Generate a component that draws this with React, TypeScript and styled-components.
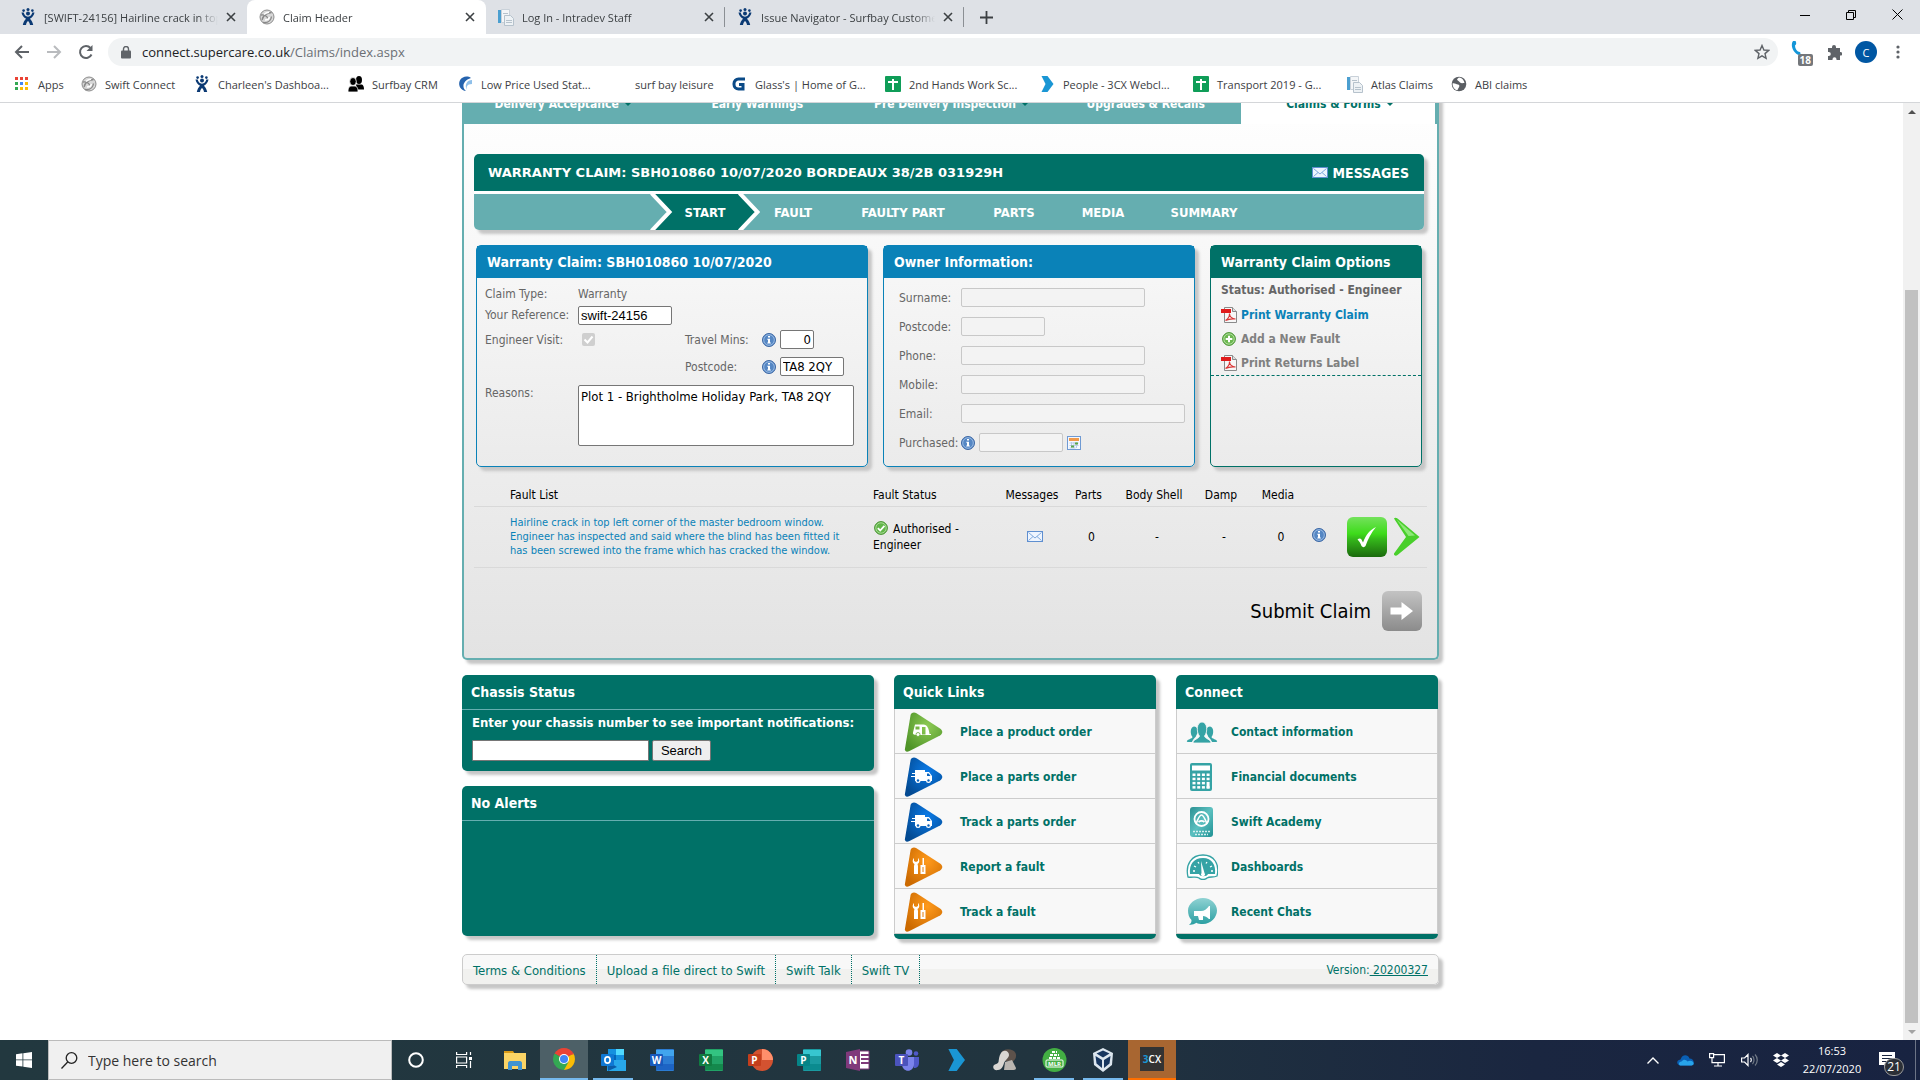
import React from "react";
import styled, { createGlobalStyle, css } from "styled-components";

const ui = `"Open Sans", "Noto Sans", sans-serif`;
const body = `"DejaVu Sans Condensed", "DejaVu Sans", sans-serif`;
const green = "#007167";
const teal = "#65aeb0";
const blue = "#0a82b8";
const shadow = "4px 4px 3px #c6c6c6";

const GlobalStyle = createGlobalStyle`
  *, *::before, *::after { box-sizing: border-box; }
  html, body { margin: 0; background: #fff; }
  button, input, textarea { font: inherit; margin: 0; }
  a { color: inherit; text-decoration: none; }
  svg { display: block; flex: none; }
`;

const Desktop = styled.div`
  display: flex;
  flex-direction: column;
  height: 100vh;
  overflow: hidden;
  font-family: ${body};
  font-size: 12px;
`;

/* ---------- browser chrome ---------- */

const Browser = styled.header`
  flex: none;
  background: #fff;
  border-bottom: 1px solid #d4d6d9;
  font-family: ${ui};
  color: #3c4043;
`;

const TabStrip = styled.div`
  display: flex;
  height: 34px;
  padding-left: 8px;
  background: #dee1e6;
`;

const Tab = styled.div<{ $active?: boolean; $rule?: boolean }>`
  display: flex;
  align-items: center;
  gap: 8px;
  width: 239px;
  padding: 0 11px 0 12px;
  font-size: 11px;
  border-radius: 8px 8px 0 0;
  ${(p) => p.$active && css`background: #fff;`}
  ${(p) =>
    p.$rule &&
    css`
      background: linear-gradient(#8b8f94, #8b8f94) right center / 1px 20px no-repeat;
    `}
`;

const TabTitle = styled.span`
  flex: 1;
  overflow: hidden;
  white-space: nowrap;
  mask-image: linear-gradient(90deg, #000 88%, transparent);
`;

const PlainButton = styled.button`
  display: flex;
  align-items: center;
  justify-content: center;
  padding: 0;
  border: 0;
  background: none;
  color: inherit;
`;

const NewTab = styled(PlainButton)`
  width: 44px;
`;

const WindowButtons = styled.div`
  display: flex;
  margin-left: auto;
  height: 29px;
`;

const WindowButton = styled(PlainButton)`
  width: 46px;
  color: #000;
`;

const Toolbar = styled.div`
  display: flex;
  align-items: center;
  height: 36px;
  padding: 0 6px;
`;

const ToolButton = styled(PlainButton)<{ $dim?: boolean }>`
  width: 32px;
  height: 32px;
  color: ${(p) => (p.$dim ? "#b9bbbe" : "#5f6368")};
`;

const AddressBar = styled.form`
  display: flex;
  flex: 1;
  align-items: center;
  height: 28px;
  margin: 0 8px 0 6px;
  padding: 0 8px 0 13px;
  border-radius: 14px;
  background: #f1f3f4;
  color: #5f6368;
`;

const AddressText = styled.a`
  flex: 1;
  margin-left: 11px;
  font-size: 13px;
  color: #6b6f74;
  strong {
    font-weight: 400;
    color: #202124;
  }
`;

const Avatar = styled.span`
  display: flex;
  align-items: center;
  justify-content: center;
  width: 22px;
  height: 22px;
  border-radius: 50%;
  background: #0057a3;
  color: #fff;
  font-size: 11px;
`;

const ExtensionIcon = styled.span`
  position: relative;
  width: 22px;
  height: 22px;
`;

const ExtensionBadge = styled.span`
  position: absolute;
  right: 0;
  bottom: -3px;
  padding: 0 2px;
  border-radius: 2px;
  background: #74777b;
  color: #fff;
  font-size: 10px;
  font-weight: 700;
  line-height: 12px;
`;

const Bookmarks = styled.nav`
  display: flex;
  align-items: center;
  height: 32px;
  padding: 0 14px 4px;
  font-size: 11px;
`;

const Bookmark = styled.a<{ $width: number }>`
  display: flex;
  align-items: center;
  gap: 8px;
  width: ${(p) => p.$width}px;
  white-space: nowrap;
`;

const BlankIcon = styled.span`
  width: 16px;
  height: 16px;
`;

/* ---------- page frame ---------- */

const Viewport = styled.main`
  display: flex;
  flex: 1;
  min-height: 0;
  overflow: hidden;
`;

const Scroller = styled.div`
  flex: 1;
  overflow: hidden;
`;

const Page = styled.div`
  max-width: 979px;
  margin: 0 auto;
  padding-right: 2px;
`;

const ScrollTrack = styled.div`
  display: flex;
  flex-direction: column;
  align-items: center;
  width: 17px;
  background: #f1f1f1;
`;

const ScrollArrow = styled.span<{ $down?: boolean }>`
  display: flex;
  align-items: center;
  justify-content: center;
  width: 17px;
  height: 17px;
  &::before {
    content: "";
    border: 4px solid transparent;
    ${(p) =>
      p.$down
        ? "border-top-color: #a3a3a3; border-bottom: 0;"
        : "border-bottom-color: #505050; border-top: 0;"}
  }
`;

const ScrollGap = styled.span`
  flex: 170;
`;

const ScrollThumb = styled.span`
  flex: 733;
  width: 13px;
  background: #c1c1c1;
`;

const Panel = styled.section`
  border: solid ${teal};
  border-width: 0 2px 2px;
  border-radius: 0 0 5px 5px;
  box-shadow: ${shadow};
  background: linear-gradient(#fff 20px, #e3e3e3);
`;

const SiteNav = styled.nav`
  display: flex;
  height: 42px;
  margin-top: -21px;
  padding-right: 2px;
  background: ${teal};
`;

const SiteLink = styled.a<{ $active?: boolean }>`
  display: flex;
  flex: 1;
  align-items: center;
  justify-content: center;
  gap: 5px;
  padding: 2px 0 0 4px;
  font-size: 12px;
  font-weight: 700;
  color: ${(p) => (p.$active ? green : "#fff")};
  background: ${(p) => (p.$active ? "#fff" : "none")};
`;

const Caret = styled.span`
  border: 4px solid transparent;
  border-top-color: ${green};
  border-bottom: 0;
`;

const PanelBody = styled.div`
  padding: 30px 10px 27px;
`;

const ClaimBanner = styled.div`
  margin: 0 3px 15px 0;
  border-radius: 5px;
  box-shadow: ${shadow};
  background: #fff;
`;

const ClaimTitle = styled.div`
  display: flex;
  align-items: center;
  justify-content: space-between;
  height: 37px;
  padding: 0 15px 0 14px;
  border-radius: 5px 5px 0 0;
  background: ${green};
  color: #fff;
`;

const ClaimHeading = styled.h1`
  margin: 0;
  font-family: "DejaVu Sans", sans-serif;
  font-size: 13px;
  font-weight: 700;
`;

const MessagesLink = styled.a`
  display: flex;
  align-items: center;
  gap: 5px;
  font-size: 14px;
  font-weight: 700;
`;

const Steps = styled.ol`
  display: flex;
  align-items: center;
  height: 36px;
  margin: 3px 0 0;
  padding: 0 0 0 176px;
  list-style: none;
  border-radius: 0 0 5px 5px;
  background: ${teal};
  color: #fff;
  font-size: 13px;
  font-weight: 700;
`;

const Step = styled.li<{ $width: number }>`
  width: ${(p) => p.$width}px;
  text-align: center;
`;

const CurrentStep = styled.li`
  display: grid;
  width: 110px;
  > * {
    grid-area: 1 / 1;
  }
  > a {
    align-self: center;
    justify-self: center;
  }
`;

/* ---------- cards ---------- */

const CardRow = styled.div`
  display: grid;
  grid-template-columns: 392fr 312fr 212fr;
  gap: 15px;
  margin: 0 5px 0 2px;
`;

const Card = styled.section<{ $tone: string }>`
  min-height: 222px;
  border: 1px solid ${(p) => p.$tone};
  border-radius: 5px;
  box-shadow: ${shadow};
  background: linear-gradient(#f8f8f8, #ebebeb);
  color: #666;
`;

const CardTitle = styled.h2<{ $tone: string }>`
  height: 32px;
  margin: 0;
  padding: 0 10px;
  background: ${(p) => p.$tone};
  color: #fff;
  font-size: 14px;
  line-height: 33px;
`;

const ClaimForm = styled.form`
  display: grid;
  grid-template-columns: 93px 107px 77px auto;
  grid-template-rows: 20px 22px 27px 27px auto;
  align-items: center;
  padding: 6px 8px;
`;

const FieldLabel = styled.label<{ $column?: number }>`
  grid-column: ${(p) => p.$column ?? 1};
  white-space: nowrap;
`;

const ReasonsLabel = styled(FieldLabel)`
  align-self: start;
  padding-top: 6px;
`;

const FieldText = styled.output`
  grid-column: 2 / -1;
`;

const WithIcon = styled.span`
  display: flex;
  align-items: center;
  gap: 4px;
`;

const TextBox = styled.input<{ $width: number }>`
  width: ${(p) => p.$width}px;
  height: 19px;
  padding: 0 2px;
  border: 1px solid #767676;
  border-radius: 2px;
  background: #fff;
  color: #000;
  font-family: "Liberation Sans", Arial, sans-serif;
  font-size: 13px;
  &:disabled {
    border-color: #c8c8c8;
    background: #f3f3f3;
  }
`;

const MinutesBox = styled(TextBox)`
  text-align: right;
  font-family: ${body};
`;

const PostcodeBox = styled(TextBox)`
  font-family: ${body};
`;

const VisitTick = styled.input`
  width: 13px;
  height: 13px;
  margin-left: 4px;
  appearance: none;
  border-radius: 2px;
  background: #cfcfcf;
`;

const TickWrap = styled.span`
  display: grid;
  grid-column: 2;
  justify-content: start;
  align-items: center;
  > * {
    grid-area: 1 / 1;
  }
  > svg {
    margin-left: 4px;
    pointer-events: none;
  }
`;

const ReasonsBox = styled.textarea`
  grid-column: 2 / -1;
  width: 276px;
  height: 61px;
  margin-top: 5px;
  padding: 2px;
  border: 1px solid #767676;
  border-radius: 2px;
  color: #000;
  font-family: ${body};
  font-size: 13px;
  line-height: 18px;
  resize: none;
`;

const OwnerForm = styled.form`
  display: grid;
  grid-template-columns: 62px auto;
  grid-auto-rows: 29px;
  align-items: center;
  padding: 5px 8px 5px 15px;
`;

const OptionStatus = styled.p`
  margin: 0;
  padding: 0 10px;
  font-weight: 700;
  line-height: 25px;
`;

const OptionList = styled.ul`
  margin: 0;
  padding: 0 10px;
  list-style: none;
  border-bottom: 1px dashed ${green};
`;

const OptionLink = styled.a<{ $live?: boolean }>`
  display: flex;
  align-items: center;
  gap: 4px;
  height: 24px;
  font-weight: 700;
  color: ${(p) => (p.$live ? blue : "#808080")};
`;

/* ---------- fault table ---------- */

const FaultTable = styled.table`
  width: 100%;
  margin-top: 15px;
  border-collapse: collapse;
  table-layout: fixed;
  color: #000;
`;

const HeadCell = styled.th<{ $left?: boolean }>`
  height: 24px;
  padding: 2px 6px 0 0;
  border-bottom: 1px solid #d9d9d9;
  font-weight: 400;
  text-align: ${(p) => (p.$left ? "left" : "center")};
  &:first-child {
    padding-left: 36px;
  }
`;

const Cell = styled.td<{ $left?: boolean }>`
  height: 61px;
  padding: 0;
  border-bottom: 1px solid #d9d9d9;
  text-align: ${(p) => (p.$left ? "left" : "center")};
  line-height: 16px;
  &:first-child {
    padding-left: 36px;
  }
  > svg {
    margin: 0 auto;
  }
`;

const FaultLink = styled.a`
  display: block;
  width: 344px;
  color: ${blue};
  font-size: 11px;
  line-height: 14px;
`;

const StatusText = styled.span`
  display: block;
  width: 100px;
  svg {
    display: inline-block;
    margin: 0 5px 0 1px;
    vertical-align: -2px;
  }
`;

const RowActions = styled.div`
  display: flex;
  align-items: center;
  gap: 6px;
  padding-left: 10px;
`;

const InfoCell = styled(Cell)`
  padding-bottom: 4px;
  > svg {
    margin: 0;
  }
`;

const SubmitRow = styled.div`
  display: flex;
  align-items: center;
  justify-content: flex-end;
  margin: 23px 5px 0 0;
`;

const SubmitButton = styled(PlainButton)`
  gap: 11px;
  color: #000;
  font-size: 20px;
`;

/* ---------- lower boxes ---------- */

const LowerRow = styled.div`
  display: grid;
  grid-template-columns: 412fr 262fr 262fr;
  column-gap: 20px;
  align-items: start;
  margin-top: 15px;
  padding-right: 1px;
`;

const Stack = styled.div`
  display: grid;
  gap: 15px;
`;

const Box = styled.section<{ $tall?: boolean }>`
  min-height: ${(p) => (p.$tall ? 150 : 96)}px;
  border-radius: 5px;
  box-shadow: ${shadow};
  background: ${green};
  color: #fff;
`;

const BoxTitle = styled.h2<{ $rule?: boolean }>`
  height: ${(p) => (p.$rule ? 35 : 34)}px;
  margin: 0;
  padding: 0 9px;
  border-bottom: ${(p) => (p.$rule ? `1px solid ${teal}` : "0")};
  font-size: 14px;
  line-height: 34px;
`;

const ChassisForm = styled.form`
  padding: 3px 10px 10px;
  font-size: 13px;
  font-weight: 700;
  line-height: 20px;
`;

const SearchLine = styled.div`
  display: flex;
  gap: 3px;
  margin-top: 7px;
`;

const ChassisInput = styled.input`
  width: 177px;
  height: 21px;
  border: 1px solid #767676;
  border-radius: 1px;
  background: #fff;
`;

const SearchButton = styled.button`
  width: 59px;
  height: 21px;
  padding: 0;
  border: 1px solid #767676;
  border-radius: 2px;
  background: #efefef;
  font-family: "Liberation Sans", Arial, sans-serif;
  font-size: 13px;
  font-weight: 400;
  color: #000;
`;

const LinkBox = styled.section`
  padding-bottom: 5px;
  border-radius: 5px;
  box-shadow: ${shadow};
  background: ${green};
  color: #fff;
`;

const LinkList = styled.ul`
  margin: 0;
  padding: 0;
  list-style: none;
  border: solid #ccc;
  border-width: 0 1px;
  background: #f8f8f8;
`;

const LinkRow = styled.a`
  display: flex;
  align-items: center;
  height: 45px;
  padding: 2px 0 0 9px;
  border-bottom: 1px solid #ccc;
  color: ${green};
  font-weight: 700;
`;

const IconSlot = styled.span<{ $width: number }>`
  width: ${(p) => p.$width}px;
`;

const Footer = styled.footer`
  display: flex;
  height: 31px;
  margin-top: 15px;
  border: 1px solid #ccc;
  border-radius: 5px;
  box-shadow: ${shadow};
  background: linear-gradient(#f8f8f8 50%, #f1f1ef 50%);
  color: ${green};
`;

const FooterLink = styled.a`
  display: flex;
  align-items: center;
  padding: 2px 10px 0;
  border-right: 1px dotted ${green};
  font-size: 13px;
`;

const Version = styled.span`
  align-self: center;
  margin-left: auto;
  padding: 2px 10px 0 0;
  a {
    text-decoration: underline;
    white-space: pre;
  }
`;

/* ---------- taskbar ---------- */

const Taskbar = styled.footer`
  display: flex;
  flex: none;
  height: 40px;
  background: linear-gradient(90deg, #22383f, #21343f 55%, #1a2640 80%, #182341);
  color: #fff;
  font-family: ${ui};
`;

const StartButton = styled(PlainButton)`
  width: 48px;
`;

const SearchBox = styled.label`
  display: flex;
  align-items: center;
  gap: 10px;
  width: 344px;
  padding-left: 12px;
  border: 1px solid #bbb;
  background: #f0f0f0;
  color: #222;
  input {
    width: 260px;
    padding: 0;
    border: 0;
    outline: 0;
    background: none;
    font-size: 14px;
  }
  input::placeholder {
    color: #333;
    opacity: 1;
  }
`;

const SystemButton = styled(PlainButton)`
  width: 48px;
`;

const Apps = styled.div`
  display: flex;
  gap: 1px;
  margin-left: 3px;
`;

const AppButton = styled(PlainButton)<{ $state?: "open" | "front" | "alert" }>`
  width: 48px;
  ${(p) =>
    p.$state === "open" &&
    css`
      background: linear-gradient(#76b9ed, #76b9ed) center bottom / 40px 2px no-repeat;
    `}
  ${(p) => p.$state === "front" && css`background: #4d6067; border-bottom: 2px solid #76b9ed;`}
  ${(p) => p.$state === "alert" && css`background: #a86631; border-bottom: 2px solid #ff6f00;`}
`;

const Tray = styled.div`
  display: flex;
  align-items: center;
  margin-left: auto;
`;

const TrayIcon = styled(PlainButton)`
  width: 32px;
  height: 40px;
`;

const Clock = styled.time`
  width: 70px;
  text-align: center;
  font-size: 11px;
  line-height: 18px;
`;

const Notifications = styled(PlainButton)`
  position: relative;
  width: 40px;
  height: 40px;
`;

const Count = styled.span`
  position: absolute;
  left: 17px;
  top: 18px;
  width: 20px;
  height: 18px;
  border: 1px solid #9a9a9a;
  border-radius: 9px;
  background: #2b2f36;
  font-size: 12px;
  line-height: 15px;
`;

const PeekStrip = styled.span`
  width: 5px;
  height: 40px;
  margin-left: 8px;
  border-left: 1px solid #6c7486;
`;

/* ---------- icons ---------- */

const Jira = () => (
  <svg width="16" height="18" viewBox="0 0 16 18" fill="#0b3a74">
    <circle cx="8" cy="1.6" r="1.5" /><circle cx="3.6" cy="2.6" r="1.3" /><circle cx="12.4" cy="2.6" r="1.3" />
    <circle cx="8" cy="5.6" r="2" />
    <path d="M1.5 4.5c.4 3 2.400 5.200 4.600 6.300C4.500 12.500 3.200 14.500 2.800 17H6c.2-1.700.9-3 2-4 1.100 1 1.800 2.300 2 4h3.200c-.4-2.500-1.700-4.500-3.300-6.200 2.200-1.100 4.200-3.300 4.600-6.300h-2.200C11.900 6.800 10.300 8.600 8 8.800 5.700 8.600 4.100 6.800 3.700 4.500z" />
  </svg>
);

const SwiftBall = () => (
  <svg width="16" height="16" viewBox="0 0 16 16" fill="none">
    <circle cx="8" cy="8" r="7" fill="#d7d7d7" stroke="#8d8d8d" />
    <path d="M3 11c1-4 4-7 9.500-7.500M4 13.500c5 .500 8-2 8.500-6M2 6c3-.5 6 1 7 4" stroke="#888" strokeWidth="1.300" />
    <path d="M5 5.500c1.500-1.500 3-2 5-2.200M6 11c2 0 4-1 4.500-3" stroke="#fff" strokeWidth="1.400" />
  </svg>
);

const Papers = () => (
  <svg width="16" height="17" viewBox="0 0 16 17">
    <path d="M3.500.5h8v13h-8z" fill="#f4f6f8" stroke="#c9d1d9" />
    <path d="M0 1h3v13H0z" fill="#4b9fd0" />
    <path d="M6.500 6.500h6l3 3v7h-9z" fill="#eef2f5" stroke="#b6c2cc" />
    <path d="M8 11.500h6M8 13.500h6M5 4.500h5" stroke="#b6c2cc" />
  </svg>
);

const Cross = () => (
  <svg width="10" height="10" viewBox="0 0 10 10" stroke="#3c4043" strokeWidth="1.600">
    <path d="M1 1l8 8M9 1L1 9" />
  </svg>
);

const Sheet = () => (
  <svg width="16" height="16" viewBox="0 0 16 16">
    <rect width="16" height="16" rx="1" fill="#0f9d58" />
    <path d="M3 6h10M8 3v11" stroke="#fff" strokeWidth="2" />
  </svg>
);

const Chevron3cx = ({ w = 13, h = 16 }: { w?: number; h?: number }) => (
  <svg width={w} height={h} viewBox="0 0 13 16">
    <path d="M1 0h6l6 8-6 8H1l4-8z" fill="#1a96d4" />
  </svg>
);

const AppsGrid = () => (
  <svg width="16" height="14" viewBox="0 0 16 14">
    {["#ea4335", "#ea4335", "#ea4335", "#34a853", "#4285f4", "#fbbc05", "#34a853", "#fbbc05", "#fbbc05"].map((c, i) => (
      <rect key={i} x={1 + (i % 3) * 5} y={Math.floor(i / 3) * 5} width="3" height="3" fill={c} />
    ))}
  </svg>
);

const People = () => (
  <svg width="16" height="16" viewBox="0 0 16 16" fill="#000">
    <ellipse cx="11" cy="4" rx="3" ry="4" /><path d="M8 8.500h6c1.500 1 2 2.500 2 5H9z" />
    <g stroke="#fff" strokeWidth=".8"><ellipse cx="5" cy="5.500" rx="3.300" ry="4" /><path d="M0 16c0-4 1-5.500 3-6h4c2 .5 3 2 3 6z" /></g>
  </svg>
);

const Wave = () => (
  <svg width="16" height="16" viewBox="0 0 16 16" fill="none">
    <path d="M14 2A7.300 7.300 0 1 0 9 15C5 12 5 5 14 2z" fill="#2563ae" />
    <path d="M15 4c-5 0-8 5-5 10-1-3 0-6 5-6" fill="#8fc0ea" />
  </svg>
);

const Glass = () => (
  <svg width="16" height="16" viewBox="0 0 16 16" fill="none">
    <path d="M14 3H7.500A4.500 4.500 0 0 0 3 7.500v1A4.500 4.500 0 0 0 7.500 13H12V8.500H8" stroke="#0a4a87" strokeWidth="3" />
  </svg>
);

const Globe = () => (
  <svg width="16" height="16" viewBox="0 0 16 16">
    <circle cx="8" cy="8" r="7.300" fill="#5a5e63" />
    <path d="M1.500 7.500C3 6.500 5 8 7 8.500c2 .5 1.500 2.500.5 3.500-.7.800-.5 2-1.500 2.300C3.500 13.500 1.500 11 1.500 7.500zM8 1.500c-1.500 1-2.500 2-1.500 2.800S8 5.500 9 6.500c1.200 1 3 .5 4.500.5-.5-3-2.500-5.200-5.500-5.500z" fill="#fff" />
  </svg>
);

const Envelope = () => (
  <svg width="16" height="11" viewBox="0 0 16 11">
    <rect x=".5" y=".5" width="15" height="10" fill="#eef5ff" stroke="#5f8fd0" />
    <path d="M1.500 1.500L8 7l6.500-5.500M1.500 9.500L6 5.500M14.500 9.500L10 5.500" fill="none" stroke="#7fa9dd" />
  </svg>
);

const Info = () => (
  <svg width="14" height="14" viewBox="0 0 14 14">
    <circle cx="7" cy="7" r="6.500" fill="#5587c4" stroke="#3c67a4" />
    <circle cx="7" cy="7" r="5.300" fill="none" stroke="#a9c6ea" strokeWidth=".8" />
    <path d="M6 3h2v1.600H6zM5.300 5.800H8v3.700h.8v1H5.300v-1H6V6.700h-.7z" fill="#fff" />
  </svg>
);

const Pdf = () => (
  <svg width="16" height="16" viewBox="0 0 16 16">
    <path d="M3.500.5h8l4 4v11h-12z" fill="#f7f7f7" stroke="#8a8a8a" />
    <path d="M11.500.5v4h4" fill="#ddd" stroke="#8a8a8a" />
    <path d="M0 2h10v4H0z" fill="#e01b1b" />
    <path d="M4.500 13.500C7 12 8.500 9 8.500 6.500c0 3 2.500 5.500 6 5.500-4-.5-7 0-10 1.500z" fill="none" stroke="#d93636" strokeWidth="1.100" />
  </svg>
);

const Add = () => (
  <svg width="16" height="14" viewBox="0 0 16 14">
    <circle cx="8" cy="7" r="6.400" fill="#6cb850" stroke="#4b9434" />
    <circle cx="8" cy="7" r="5.200" fill="none" stroke="#c2e6b4" strokeWidth=".8" />
    <path d="M8 3.700v6.600M4.700 7h6.600" stroke="#fff" strokeWidth="2" />
  </svg>
);

const Accepted = () => (
  <svg width="14" height="14" viewBox="0 0 14 14">
    <circle cx="7" cy="7" r="6.400" fill="#62b64a" stroke="#4b9434" />
    <circle cx="7" cy="7" r="5.200" fill="none" stroke="#b7e2a8" strokeWidth=".8" />
    <path d="M3.800 7.200L6.200 9.500l4.200-4.700" stroke="#fff" strokeWidth="1.800" fill="none" />
  </svg>
);

const Calendar = () => (
  <svg width="14" height="14" viewBox="0 0 14 14">
    <rect x=".5" y=".5" width="13" height="13" fill="#f4f8ff" stroke="#6f9ad3" />
    <path d="M2 2h10v3H2z" fill="#f09a4c" />
    <path d="M2.500 7h9M2.500 9.500h9M2.500 12h6M4.500 6v6M7 6v6M9.500 6v6" stroke="#b9cde8" />
    <path d="M8 6.500h3v2H8zM4 9.500h3v2H4z" fill="#5ba64a" />
  </svg>
);

const GreenTick = () => (
  <svg width="40" height="40" viewBox="0 0 40 40">
    <defs>
      <linearGradient id="tick" x2="0" y2="1">
        <stop stopColor="#74e25c" /><stop offset=".42" stopColor="#3ddb1a" /><stop offset=".55" stopColor="#35b81b" /><stop offset="1" stopColor="#1b6a0d" />
      </linearGradient>
    </defs>
    <rect width="40" height="40" rx="6" fill="url(#tick)" />
    <path d="M10.500 22.500c1.500-1.500 3-1.500 4 0l1.500 3C19 18 22.500 13 29 10c-5 6-8 12-10.500 19-1 1.500-3 1.500-4 0-.8-2.500-2-4.500-4-6.500z" fill="#fff" />
  </svg>
);

const GreenChevron = () => (
  <svg width="27" height="40" viewBox="0 0 27 40">
    <path d="M1 1.500C1.500.3 3.500.5 4.500 1.500L26.500 20 4.500 38c-1.500 1.500-4 .5-3.500-1.500L13 20z" fill="#49cf2b" />
    <path d="M3.500 2.500L22 18.500 15.500 19z" fill="#8ee878" />
  </svg>
);

const GreyArrow = () => (
  <svg width="40" height="40" viewBox="0 0 40 40">
    <defs>
      <linearGradient id="grey" x2="0" y2="1"><stop stopColor="#c3c3c3" /><stop offset="1" stopColor="#8b8b8b" /></linearGradient>
    </defs>
    <rect width="40" height="40" rx="6" fill="url(#grey)" />
    <path d="M8.500 16.500h11V11L31 20l-11.500 9v-5.500h-11z" fill="#fff" />
  </svg>
);

const StepShape = () => (
  <svg width="110" height="36" viewBox="0 0 110 36">
    <path d="M0 0h91l17 18-17 18H0l18-18z" fill={green} />
    <path d="M1.500 -1l18 19-18 19M89.500-1l18 19-18 19" fill="none" stroke="#fff" strokeWidth="4" />
  </svg>
);

const VisitMark = () => (
  <svg width="13" height="13" viewBox="0 0 13 13">
    <path d="M2.500 6.500l3 3 5-6" fill="none" stroke="#fff" strokeWidth="2" />
  </svg>
);

type Kind = "caravan" | "van" | "tools";
const tones: Record<Kind, string[]> = {
  caravan: ["#8ecb55", "#4f9428"],
  van: ["#0b7be8", "#034a92"],
  tools: ["#ff9a1c", "#cc6a00"],
};

const Play = ({ kind }: { kind: Kind }) => (
  <svg width="39" height="40" viewBox="0 0 39 40">
    <defs>
      <radialGradient id={`play-${kind}`} cx=".6" cy=".35" r=".7"><stop stopColor={tones[kind][0]} /><stop offset="1" stopColor={tones[kind][1]} /></radialGradient>
    </defs>
    <path d="M6.500 3.500C7 .5 10 0 12.500 1.200L36 16.500c3 2 3 5 0 7L5.500 39c-3 1.500-5 .5-4.500-2.500z" fill={`url(#play-${kind})`} />
    {kind === "caravan" && (
      <g fill="#fff">
        <path fillRule="evenodd" d="M11 12.500h8.500c3.500 0 5.500 4 6 9.500h1.500v1H14c-3.500 0-5.500-.5-5-2.500zM11.500 14.500v3h4v-3zM18 15v7.500h3.500V15z" /><circle cx="14" cy="22.500" r="2" stroke="#6aa83c" strokeWidth=".8" />
      </g>
    )}
    {kind === "van" && (
      <g fill="#fff">
        <path d="M11 13h10v2h4l3 4v5H11v-4H7v-1h4v-2H8v-1h3z" /><circle cx="14" cy="23.500" r="2.500" /><circle cx="24.500" cy="23.500" r="2.500" />
        <path d="M23 16.500h1.800l1.700 2.500H23z" fill="#0762bd" /><circle cx="14" cy="23.500" r="1.200" fill="#0762bd" /><circle cx="24.500" cy="23.500" r="1.200" fill="#0762bd" />
      </g>
    )}
    {kind === "tools" && (
      <g fill="#fff">
        <path d="M10 11v3l2 1 2-1v-3c2 2 1.500 5-.5 6l.5 2v8h-4v-8l.5-2c-2-1-2.500-4-.5-6zM18.500 11h1.500v7h1.500v9h-5v-9h2z" /><path d="M19 20v5" stroke="#e07c0a" />
      </g>
    )}
  </svg>
);

const mint = "#35a3a5";
const Contacts = () => (
  <svg width="32" height="22" viewBox="0 0 32 22" fill={mint}>
    <path d="M3 21c0 0-3 0-2-1 1-2 5-2 5.500-4C4 13 4 6 8 5.500c3 0 4 3 3.500 6.500L10 15c0 1-3 3-4 6z" />
    <path d="M29 21c0 0 3 0 2-1-1-2-5-2-5.500-4 2.500-3 2.500-10-1.500-10.500-3 0-4 3-3.500 6.500L22 15c0 1 3 3 4 6z" />
    <path d="M7 22c0-4 6-4 6.500-7C10 11 10.500 1 16 1s6 10 2.500 14c.5 3 6.500 3 6.500 7z" stroke="#f8f8f8" strokeWidth=".8" />
  </svg>
);

const Calculator = () => (
  <svg width="32" height="28" viewBox="0 0 32 28">
    <rect x="4" width="22" height="28" rx="2" fill={mint} /><path d="M6 2.500h18v5H6z" fill="#fff" />
    {[0, 1, 2, 3].map((r) => [0, 1, 2, 3].map((c) => <rect key={`${r}${c}`} x={6.500 + c * 4.700} y={10.500 + r * 4.200} width="3" height={r === 2 && c === 3 ? 6.500 : 2.500} fill="#fff" />))}
  </svg>
);

const Academy = () => (
  <svg width="32" height="30" viewBox="0 0 32 30">
    <defs><linearGradient id="academy" x2="1" y2="1"><stop stopColor="#2c9193" /><stop offset=".5" stopColor="#5cc0c0" /><stop offset="1" stopColor="#1f9194" /></linearGradient></defs>
    <rect x="4" width="23" height="30" rx="3" fill="url(#academy)" />
    <circle cx="15.500" cy="12" r="7" fill="none" stroke="#fff" strokeWidth="1.800" /><path d="M10 17c1.500-4 3.500-9 5.500-9s4 5 5.500 9M12.500 15c2-1.500 4-1.500 6 0" fill="none" stroke="#fff" strokeWidth="1.700" />
    <path d="M7 24.500h17M9 27.500h13" stroke="#d6f0f0" strokeWidth="1.600" strokeDasharray="2 1" />
  </svg>
);

const Gauge = () => (
  <svg width="32" height="26" viewBox="0 0 32 26">
    <path d="M2 23C-1 10 6 1 17 1s17 9 14 21c-4 2-7 0-10 2-2 2-6 2-8 0-3-2-7 0-11-1z" fill="#fff" stroke={mint} strokeWidth="1.300" />
    <path d="M4 20C3 10 8 4 17 4s13 7 12 16h-7c-1 3-8 3-9 0z" fill={mint} />
    <path d="M15 7l3.500 12a2 2 0 1 1-3 0z" fill="#fff" /><path d="M7 17h2M8 12l2 1M12 8l1 1.500M21 8l-1 1.500M26 12l-2 1M27 17h-2" stroke="#fff" strokeWidth="1.300" />
  </svg>
);

const Chats = () => (
  <svg width="32" height="27" viewBox="0 0 32 27">
    <defs><linearGradient id="chat" x2="0" y2="1"><stop stopColor="#8fd2d3" /><stop offset="1" stopColor="#2a9fa2" /></linearGradient></defs>
    <path d="M17 0c8 0 14 6 14 12.500S25 26 17 26c-3 0-5 0-6.500-1.200C8 26.500 5 27 3 26.500c2-1 2.500-2.500 2.500-4.500C3 19.500 2 16 2 12.500 2 6 9 0 17 0z" fill="url(#chat)" />
    <path d="M8 13h7c3 0 6-2 8-5h1v13h-1c-2-2-4-3-6-3v4h-4l-1-4H8z" fill="#fff" />
  </svg>
);

const Office = ({ letter, back, mid, front }: { letter: string; back: string; mid: string; front: string }) => (
  <svg width="24" height="22" viewBox="0 0 24 22">
    <rect x="6" width="18" height="22" rx="1" fill={mid} /><path d="M6 1h18v6H6z" fill={back} /><path d="M6 15h18v6H6z" fill={front} opacity=".7" />
    <rect y="5" width="13" height="12" rx="1" fill={front} />
    <text x="6.500" y="14.500" textAnchor="middle" fontFamily="Open Sans, sans-serif" fontSize="10" fontWeight="700" fill="#fff">{letter}</text>
  </svg>
);

const PowerPoint = () => (
  <svg width="25" height="22" viewBox="0 0 25 22">
    <circle cx="14" cy="11" r="11" fill="#d35230" /><path d="M14 0a11 11 0 0 1 11 11H14z" fill="#ff8f6b" />
    <rect y="5" width="13" height="12" rx="1" fill="#c43e1c" />
    <text x="6.500" y="14.500" textAnchor="middle" fontFamily="Open Sans, sans-serif" fontSize="10" fontWeight="700" fill="#fff">P</text>
  </svg>
);

const OneNote = () => (
  <svg width="24" height="22" viewBox="0 0 24 22">
    <path d="M12 2h11v18H12z" fill="#fff" stroke="#80397b" /><path d="M15 6h8M15 10h8M15 14h8" stroke="#80397b" strokeWidth="2" /><path d="M0 3l14-3v22L0 19z" fill="#80397b" />
    <text x="7" y="15" textAnchor="middle" fontFamily="Open Sans, sans-serif" fontSize="11" fontWeight="700" fill="#fff">N</text>
  </svg>
);

const Teams = () => (
  <svg width="24" height="22" viewBox="0 0 24 22">
    <circle cx="14" cy="3.500" r="3.300" fill="#7b83eb" /><circle cx="21" cy="4.500" r="2.300" fill="#5059c9" />
    <path d="M17 8h7v6c0 3-2 5-5 5z" fill="#5059c9" /><path d="M7 8h12v7c0 9-12 9-12 0z" fill="#7b83eb" />
    <rect y="5" width="13" height="12" rx="1" fill="#4b53bc" />
    <text x="6.500" y="14.500" textAnchor="middle" fontFamily="Open Sans, sans-serif" fontSize="10" fontWeight="700" fill="#fff">T</text>
  </svg>
);

const Outlook = () => (
  <svg width="25" height="22" viewBox="0 0 25 22">
    <path d="M7 0h16v12H7z" fill="#1490df" /><path d="M15 0h8v6h-8z" fill="#50d9ff" /><path d="M7 6h8v6H7z" fill="#0364b8" /><path d="M6 11h19v11H6z" fill="#28a8ea" /><path d="M6 12l10 6-9 4z" fill="#0a5ca8" />
    <rect y="5" width="13" height="12" rx="1" fill="#0f78d4" /><ellipse cx="6.500" cy="11" rx="2.600" ry="3.200" fill="none" stroke="#fff" strokeWidth="1.700" />
  </svg>
);

const Explorer = () => (
  <svg width="22" height="19" viewBox="0 0 22 19">
    <path d="M0 0h9l2 3H0z" fill="#d99a17" /><path d="M0 2h22v16H0z" fill="#fbd465" /><path d="M4 19v-7c0-1 1-2 2-2h10c1 0 2 1 2 2v7h-4v-4H8v4z" fill="#3f93d2" />
  </svg>
);

const Chrome = () => (
  <svg width="22" height="22" viewBox="0 0 22 22">
    <path d="M11 11L1.500 5.500A11 11 0 0 1 20.500 5.500z" fill="#ea4335" /><path d="M11 11l9.500-5.500A11 11 0 0 1 11 22z" fill="#fbbc05" /><path d="M11 11v0L1.500 5.500A11 11 0 0 0 11 22l4.500-8z" fill="#34a853" />
    <path d="M11 6h9.500" stroke="#ea4335" /><circle cx="11" cy="11" r="5" fill="#fff" /><circle cx="11" cy="11" r="4" fill="#4285f4" />
  </svg>
);

const Handset = () => (
  <svg width="24" height="22" viewBox="0 0 24 22">
    <path d="M8 4C10-1 20-1 22.500 4c1.500 3.500 0 6.500-3 9L12 12z" fill="#5d524b" />
    <path d="M8 4c3-4 8-2 8 2 0 3-4 5-5 8-1 4-3 7-6 7-4 1-6-3-4-5 2-1.500 4-1 4.500-3C6 10 6 7 8 4z" fill="#d9d6d2" />
    <path d="M12 13l7-2 4 8c0 2-2 2-4 2h-8z" fill="#b9b5b0" />
  </svg>
);

const Mlr = () => (
  <svg width="25" height="24" viewBox="0 0 25 24">
    <circle cx="12.500" cy="12" r="12" fill="#43ae43" /><path d="M10 4h5M8 7h9M7 10h11" stroke="#fff" strokeWidth="1.800" strokeDasharray="3 1" /><rect x="4" y="12" width="17" height="7" rx="1" fill="none" stroke="#fff" />
    <text x="12.500" y="18" textAnchor="middle" fontFamily="Open Sans, sans-serif" fontSize="6" fontWeight="700" fill="#fff">MLR</text>
  </svg>
);

const Cube = () => (
  <svg width="22" height="24" viewBox="0 0 22 24">
    <path d="M11 0l10 5-1 12-9 7-9-7L1 5z" fill="#dce6ef" /><path d="M11 2.500L17.500 5.500l-6.500 4-6.500-4z" fill="#17365f" /><path d="M3.500 8l6.500 4v8l-5.500-4.500zM18.500 8L12 12v8l5.500-4.500z" fill="#17365f" />
  </svg>
);

const ThreeCx = () => (
  <svg width="24" height="24" viewBox="0 0 24 24">
    <rect width="24" height="24" fill="#333" />
    <text x="12" y="15.500" textAnchor="middle" fontFamily="Open Sans, sans-serif" fontSize="10" fontWeight="600" fill="#fff"><tspan fill="#1a96d4" fontWeight="700">3</tspan>CX</text>
  </svg>
);

const stroke = { fill: "none", stroke: "currentColor" } as const;

/* ---------- data ---------- */

const bookmarks: { text: string; width: number; icon: React.ReactNode }[] = [
  { text: "Apps", width: 67, icon: <AppsGrid /> },
  { text: "Swift Connect", width: 113, icon: <SwiftBall /> },
  { text: "Charleen's Dashboa...", width: 154, icon: <Jira /> },
  { text: "Surfbay CRM", width: 109, icon: <People /> },
  { text: "Low Price Used Stat...", width: 154, icon: <Wave /> },
  { text: "surf bay leisure", width: 120, icon: <BlankIcon /> },
  { text: "Glass's | Home of G...", width: 154, icon: <Glass /> },
  { text: "2nd Hands Work Sc...", width: 154, icon: <Sheet /> },
  { text: "People - 3CX Webcl...", width: 154, icon: <Chevron3cx w={16} /> },
  { text: "Transport 2019 - G...", width: 154, icon: <Sheet /> },
  { text: "Atlas Claims", width: 104, icon: <Papers /> },
  { text: "ABI claims", width: 104, icon: <Globe /> },
];

const owner: [string, string, number][] = [
  ["surname", "Surname:", 184],
  ["postcode", "Postcode:", 84],
  ["phone", "Phone:", 184],
  ["mobile", "Mobile:", 184],
  ["email", "Email:", 224],
];

const quick: [string, Kind][] = [
  ["Place a product order", "caravan"],
  ["Place a parts order", "van"],
  ["Track a parts order", "van"],
  ["Report a fault", "tools"],
  ["Track a fault", "tools"],
];

const connect: [string, React.ReactNode][] = [
  ["Contact information", <Contacts />],
  ["Financial documents", <Calculator />],
  ["Swift Academy", <Academy />],
  ["Dashboards", <Gauge />],
  ["Recent Chats", <Chats />],
];

const apps: [string, React.ReactNode, ("open" | "front" | "alert")?][] = [
  ["File Explorer", <Explorer />],
  ["Chrome", <Chrome />, "front"],
  ["Outlook", <Outlook />, "open"],
  ["Word", <Office letter="W" back="#41a5ee" mid="#2b7cd3" front="#185abd" />],
  ["Excel", <Office letter="X" back="#33c481" mid="#21a366" front="#107c41" />],
  ["PowerPoint", <PowerPoint />],
  ["Publisher", <Office letter="P" back="#37c6d0" mid="#1a9ba1" front="#058487" />],
  ["OneNote", <OneNote />],
  ["Teams", <Teams />],
  ["3CX Webclient", <Chevron3cx w={18} h={24} />],
  ["Phone", <Handset />],
  ["MLR", <Mlr />, "open"],
  ["VirtualBox", <Cube />, "open"],
  ["3CX", <ThreeCx />, "alert"],
];

/* ---------- sections ---------- */

const BrowserChrome = () => (
  <Browser>
    <TabStrip>
      <Tab><Jira /><TabTitle>[SWIFT-24156] Hairline crack in top</TabTitle><PlainButton aria-label="Close tab"><Cross /></PlainButton></Tab>
      <Tab $active><SwiftBall /><TabTitle>Claim Header</TabTitle><PlainButton aria-label="Close tab"><Cross /></PlainButton></Tab>
      <Tab $rule><Papers /><TabTitle>Log In - Intradev Staff</TabTitle><PlainButton aria-label="Close tab"><Cross /></PlainButton></Tab>
      <Tab $rule><Jira /><TabTitle>Issue Navigator - Surfbay Customer</TabTitle><PlainButton aria-label="Close tab"><Cross /></PlainButton></Tab>
      <NewTab aria-label="New tab"><svg width="13" height="13" viewBox="0 0 13 13" {...stroke} strokeWidth="1.800"><path d="M6.500 0v13M0 6.500h13" /></svg></NewTab>
      <WindowButtons>
        <WindowButton aria-label="Minimise"><svg width="10" height="10" {...stroke}><path d="M0 5.500h10" /></svg></WindowButton>
        <WindowButton aria-label="Restore"><svg width="10" height="10" {...stroke}><path d="M.5 2.500h7v7h-7zM2.500 2.500v-2h7v7h-2" /></svg></WindowButton>
        <WindowButton aria-label="Close"><svg width="11" height="11" {...stroke}><path d="M.5.5l10 10M10.500.5l-10 10" /></svg></WindowButton>
      </WindowButtons>
    </TabStrip>
    <Toolbar>
      <ToolButton aria-label="Back"><svg width="16" height="16" viewBox="0 0 16 16" {...stroke} strokeWidth="2"><path d="M15 8H2M8 2L2 8l6 6" /></svg></ToolButton>
      <ToolButton aria-label="Forward" $dim><svg width="16" height="16" viewBox="0 0 16 16" {...stroke} strokeWidth="2"><path d="M1 8h13M8 2l6 6-6 6" /></svg></ToolButton>
      <ToolButton aria-label="Reload"><svg width="16" height="16" viewBox="0 0 16 16" {...stroke} strokeWidth="2"><path d="M13.500 10.500A6 6 0 1 1 12.500 4" /><path d="M14.500 1v6h-6z" fill="currentColor" stroke="none" /></svg></ToolButton>
      <AddressBar>
        <svg width="10" height="13" viewBox="0 0 10 13"><rect y="4.500" width="10" height="8" rx="1" fill="#5f6368" /><path d="M2.500 5V3a2.500 2.500 0 0 1 5 0v2" {...stroke} strokeWidth="1.400" /></svg>
        <AddressText href="#"><strong>connect.supercare.co.uk</strong>/Claims/index.aspx</AddressText>
        <svg width="16" height="16" viewBox="0 0 16 16" {...stroke} strokeWidth="1.400"><path d="M8 1.500l1.900 4.500 4.800.4-3.700 3.200 1.100 4.700L8 11.800l-4.100 2.500L5 9.600 1.300 6.400 6.100 6z" /></svg>
      </AddressBar>
      <ToolButton aria-label="3CX extension">
        <ExtensionIcon>
          <svg width="10" height="14" viewBox="0 0 10 14"><path d="M2 0h2.500c1 1.500 1 3.500-.5 4.500C4 8 6 9.500 7 10.500c2 0 4 2 1 3.500C2 12-1 4 2 0z" fill="#1496d8" /></svg>
          <ExtensionBadge>18</ExtensionBadge>
        </ExtensionIcon>
      </ToolButton>
      <ToolButton aria-label="Extensions"><svg width="15" height="15" viewBox="0 0 15 15" fill="currentColor"><path d="M5 2a2 2 0 0 1 4 0v1h4v4h.5a1.800 1.800 0 0 1 0 3.600H13V15H9.500v-.7a2 2 0 0 0-4 0V15H1v-4h.8a2 2 0 0 0 0-4H1V3h4z" /></svg></ToolButton>
      <ToolButton aria-label="Profile"><Avatar>C</Avatar></ToolButton>
      <ToolButton aria-label="Menu"><svg width="4" height="16" viewBox="0 0 4 16" fill="currentColor"><circle cx="2" cy="3" r="1.600" /><circle cx="2" cy="8" r="1.600" /><circle cx="2" cy="13" r="1.600" /></svg></ToolButton>
    </Toolbar>
    <Bookmarks>
      {bookmarks.map((b) => (
        <Bookmark key={b.text} href="#" $width={b.width}>{b.icon}{b.text}</Bookmark>
      ))}
    </Bookmarks>
  </Browser>
);

const ClaimCard = () => (
  <Card $tone={blue}>
    <CardTitle $tone={blue}>Warranty Claim: SBH010860 10/07/2020</CardTitle>
    <ClaimForm>
      <FieldLabel htmlFor="type">Claim Type:</FieldLabel>
      <FieldText id="type">Warranty</FieldText>
      <FieldLabel htmlFor="reference">Your Reference:</FieldLabel>
      <TextBox id="reference" $width={94} defaultValue="swift-24156" />
      <FieldLabel htmlFor="visit">Engineer Visit:</FieldLabel>
      <TickWrap><VisitTick id="visit" type="checkbox" defaultChecked disabled /><VisitMark /></TickWrap>
      <FieldLabel htmlFor="travel" $column={3}>Travel Mins:</FieldLabel>
      <WithIcon><Info /><MinutesBox id="travel" $width={34} defaultValue="0" /></WithIcon>
      <FieldLabel htmlFor="visit-postcode" $column={3}>Postcode:</FieldLabel>
      <WithIcon><Info /><PostcodeBox id="visit-postcode" $width={64} defaultValue="TA8 2QY" /></WithIcon>
      <ReasonsLabel htmlFor="reasons">Reasons:</ReasonsLabel>
      <ReasonsBox id="reasons" defaultValue="Plot 1 - Brightholme Holiday Park, TA8 2QY" />
    </ClaimForm>
  </Card>
);

const OwnerCard = () => (
  <Card $tone={blue}>
    <CardTitle $tone={blue}>Owner Information:</CardTitle>
    <OwnerForm>
      {owner.map(([id, label, width]) => (
        <React.Fragment key={id}>
          <FieldLabel htmlFor={id}>{label}</FieldLabel>
          <TextBox id={id} $width={width} disabled />
        </React.Fragment>
      ))}
      <FieldLabel htmlFor="purchased">Purchased:</FieldLabel>
      <WithIcon><Info /><TextBox id="purchased" $width={84} disabled /><Calendar /></WithIcon>
    </OwnerForm>
  </Card>
);

const OptionsCard = () => (
  <Card $tone={green}>
    <CardTitle $tone={green}>Warranty Claim Options</CardTitle>
    <OptionStatus>Status: Authorised - Engineer</OptionStatus>
    <OptionList>
      <li><OptionLink href="#" $live><Pdf />Print Warranty Claim</OptionLink></li>
      <li><OptionLink href="#"><Add />Add a New Fault</OptionLink></li>
      <li><OptionLink href="#"><Pdf />Print Returns Label</OptionLink></li>
    </OptionList>
  </Card>
);

const Faults = () => (
  <FaultTable>
    <colgroup>
      {[399, 130, 64, 49, 82, 52, 62, 25, 90].map((w, i) => <col key={i} width={w} />)}
    </colgroup>
    <thead>
      <tr>
        <HeadCell $left>Fault List</HeadCell>
        <HeadCell $left>Fault Status</HeadCell>
        {["Messages", "Parts", "Body Shell", "Damp", "Media"].map((h) => <HeadCell key={h}>{h}</HeadCell>)}
        <HeadCell /><HeadCell />
      </tr>
    </thead>
    <tbody>
      <tr>
        <Cell $left>
          <FaultLink href="#">Hairline crack in top left corner of the master bedroom window. Engineer has inspected and said where the blind has been fitted it has been screwed into the frame which has cracked the window.</FaultLink>
        </Cell>
        <Cell $left><StatusText><Accepted />Authorised - Engineer</StatusText></Cell>
        <Cell><Envelope /></Cell>
        <Cell>0</Cell>
        <Cell>-</Cell>
        <Cell>-</Cell>
        <Cell>0</Cell>
        <InfoCell $left><Info /></InfoCell>
        <Cell>
          <RowActions>
            <PlainButton aria-label="Accept"><GreenTick /></PlainButton>
            <PlainButton aria-label="Open fault"><GreenChevron /></PlainButton>
          </RowActions>
        </Cell>
      </tr>
    </tbody>
  </FaultTable>
);

const SystemTaskbar = () => (
  <Taskbar>
    <StartButton aria-label="Start"><svg width="16" height="16" viewBox="0 0 16 16" fill="#fff"><path d="M0 2.200l6.500-.9v6.200H0zM7.300 1.200L16 0v7.500H7.300zM0 8.300h6.500v6.300L0 13.700zM7.300 8.300H16V16l-8.700-1.300z" /></svg></StartButton>
    <SearchBox>
      <svg width="17" height="17" viewBox="0 0 17 17" {...stroke} strokeWidth="1.300"><circle cx="10.500" cy="6" r="5.300" /><path d="M6.700 10L.5 16.500" /></svg>
      <input type="text" placeholder="Type here to search" aria-label="Type here to search" />
    </SearchBox>
    <SystemButton aria-label="Cortana"><svg width="16" height="16" viewBox="0 0 16 16" {...stroke} strokeWidth="2"><circle cx="8" cy="8" r="6.800" /></svg></SystemButton>
    <SystemButton aria-label="Task view"><svg width="17" height="16" viewBox="0 0 17 16" {...stroke} strokeWidth="1.200"><path d="M.6 0v2.500h10V0M.6 16v-2.500h10V16M.6 5h10v6H.6zM14.500 0v3M14.500 9v7" /><path d="M13 5h3v3h-3z" fill="#fff" stroke="none" /></svg></SystemButton>
    <Apps>
      {apps.map(([name, icon, state]) => <AppButton key={name} aria-label={name} $state={state}>{icon}</AppButton>)}
    </Apps>
    <Tray>
      <TrayIcon aria-label="Show hidden icons"><svg width="12" height="7" viewBox="0 0 12 7" {...stroke} strokeWidth="1.400"><path d="M.5 6.500L6 1l5.500 5.500" /></svg></TrayIcon>
      <TrayIcon aria-label="OneDrive"><svg width="17" height="11" viewBox="0 0 17 11"><path d="M4 10.500C-1 10.500-1 5 3.500 4.500 5-1 11-1 12.500 3.500c5 0 6 7 1 7z" fill="#0a5fb4" /><path d="M3 10.500c-2-1-1-4 1.500-4C7 3.500 9 5 10.500 6.500c3-2 7 0 6 3l-1.500 1z" fill="#28a4ea" /></svg></TrayIcon>
      <TrayIcon aria-label="Network"><svg width="16" height="14" viewBox="0 0 16 14" {...stroke} strokeWidth="1.200"><path d="M5 1.600h10.400v8H3V5M.6.600h4v4h-4zM9 10v3M5 13h8" /></svg></TrayIcon>
      <TrayIcon aria-label="Volume"><svg width="17" height="14" viewBox="0 0 17 14" {...stroke} strokeWidth="1.200"><path d="M.6 5h3L7 1.500v11L3.600 9h-3zM9.500 5c1 1 1 3 0 4" /><path d="M11.500 3c2 2 2 6 0 8M14 1.500c3 3 3 8 0 11" stroke="#717a86" /></svg></TrayIcon>
      <TrayIcon aria-label="Dropbox"><svg width="16" height="14" viewBox="0 0 16 14" fill="#fff"><path d="M4 0l4 2.500L4 5 0 2.500zM12 0l4 2.500L12 5 8 2.500zM4 5l4 2.500L4 10 0 7.500zM12 5l4 2.500-4 2.500-4-2.500zM8 9l4 2.500L8 14l-4-2.500z" /></svg></TrayIcon>
      <Clock>16:53<br />22/07/2020</Clock>
      <Notifications aria-label="Notifications">
        <svg width="16" height="16" viewBox="0 0 16 16"><path d="M0 0h16v13H8l-3 3v-3H0z" fill="#fff" /><path d="M3 3.500h10M3 6.500h10M3 9.500h6" stroke="#1a2640" /></svg>
        <Count>21</Count>
      </Notifications>
      <PeekStrip />
    </Tray>
  </Taskbar>
);

export default function App() {
  return (
    <Desktop>
      <GlobalStyle />
      <BrowserChrome />
      <Viewport>
        <Scroller>
          <Page>
            <Panel>
              <SiteNav>
                <SiteLink href="#">Delivery Acceptance<Caret /></SiteLink>
                <SiteLink href="#">Early Warnings</SiteLink>
                <SiteLink href="#">Pre Delivery Inspection<Caret /></SiteLink>
                <SiteLink href="#">Upgrades &amp; Recalls</SiteLink>
                <SiteLink href="#" $active>Claims &amp; Forms<Caret /></SiteLink>
              </SiteNav>
              <PanelBody>
                <ClaimBanner>
                  <ClaimTitle>
                    <ClaimHeading>WARRANTY CLAIM: SBH010860 10/07/2020 BORDEAUX 38/2B 031929H</ClaimHeading>
                    <MessagesLink href="#"><Envelope />MESSAGES</MessagesLink>
                  </ClaimTitle>
                  <Steps>
                    <CurrentStep><StepShape /><a href="#">START</a></CurrentStep>
                    <Step $width={66}><a href="#">FAULT</a></Step>
                    <Step $width={154}><a href="#">FAULTY PART</a></Step>
                    <Step $width={68}><a href="#">PARTS</a></Step>
                    <Step $width={110}><a href="#">MEDIA</a></Step>
                    <Step $width={92}><a href="#">SUMMARY</a></Step>
                  </Steps>
                </ClaimBanner>
                <CardRow>
                  <ClaimCard />
                  <OwnerCard />
                  <OptionsCard />
                </CardRow>
                <Faults />
                <SubmitRow>
                  <SubmitButton>Submit Claim<GreyArrow /></SubmitButton>
                </SubmitRow>
              </PanelBody>
            </Panel>
            <LowerRow>
              <Stack>
                <Box>
                  <BoxTitle $rule>Chassis Status</BoxTitle>
                  <ChassisForm>
                    <label htmlFor="chassis">Enter your chassis number to see important notifications:</label>
                    <SearchLine><ChassisInput id="chassis" /><SearchButton type="button">Search</SearchButton></SearchLine>
                  </ChassisForm>
                </Box>
                <Box $tall><BoxTitle $rule>No Alerts</BoxTitle></Box>
              </Stack>
              <LinkBox>
                <BoxTitle>Quick Links</BoxTitle>
                <LinkList>
                  {quick.map(([text, kind]) => (
                    <li key={text}><LinkRow href="#"><IconSlot $width={56}><Play kind={kind} /></IconSlot>{text}</LinkRow></li>
                  ))}
                </LinkList>
              </LinkBox>
              <LinkBox>
                <BoxTitle>Connect</BoxTitle>
                <LinkList>
                  {connect.map(([text, icon]) => (
                    <li key={text}><LinkRow href="#"><IconSlot $width={45}>{icon}</IconSlot>{text}</LinkRow></li>
                  ))}
                </LinkList>
              </LinkBox>
            </LowerRow>
            <Footer>
              <FooterLink href="#">Terms &amp; Conditions</FooterLink>
              <FooterLink href="#">Upload a file direct to Swift</FooterLink>
              <FooterLink href="#">Swift Talk</FooterLink>
              <FooterLink href="#">Swift TV</FooterLink>
              <Version>Version:<a href="#"> 20200327</a></Version>
            </Footer>
          </Page>
        </Scroller>
        <ScrollTrack><ScrollArrow /><ScrollGap /><ScrollThumb /><ScrollArrow $down /></ScrollTrack>
      </Viewport>
      <SystemTaskbar />
    </Desktop>
  );
}
